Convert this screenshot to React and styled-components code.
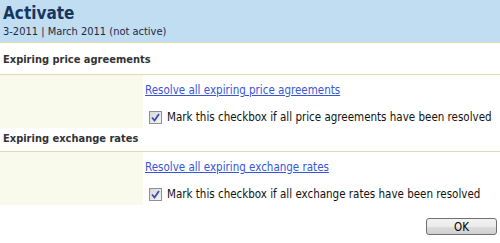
import React from 'react';
import styled, { createGlobalStyle } from 'styled-components';

const GlobalStyle = createGlobalStyle`
  html, body {
    margin: 0;
    padding: 0;
    background: #ffffff;
    font-family: "DejaVu Sans Condensed", "DejaVu Sans", sans-serif;
    font-size: 11px;
  }
`;

const Page = styled.div`
  width: 500px;
  height: 243px;
  display: flex;
  flex-direction: column;
  overflow: hidden;
`;

const Header = styled.div`
  height: 43px;
  box-sizing: border-box;
  padding: 2px 5px 0 3px;
  background: #c1ddf1;
  border-bottom: 1px solid #dcdcb2;
`;

const Title = styled.h1`
  margin: 0;
  font-size: 17px;
  line-height: 22px;
  font-weight: bold;
  color: #15375f;
`;

const Subtitle = styled.div`
  margin-top: 1px;
  font-size: 11px;
  line-height: 14px;
  color: #1c2a44;
`;

const Heading = styled.div`
  height: ${({ h }) => h}px;
  box-sizing: border-box;
  display: flex;
  align-items: flex-end;
  padding: 0 0 ${({ pb }) => pb}px 3px;
  font-weight: bold;
  color: #333333;
  border-bottom: 1px solid #dcdcb2;
`;

const Body = styled.div`
  height: 53px;
  display: grid;
  grid-template-columns: 143px 1fr;
  font-size: 11.5px;
`;

const Side = styled.div`
  background: #fafaec;
`;

const Content = styled.div`
  display: flex;
  flex-direction: column;
  padding: ${({ pt }) => pt}px 0 0 2px;
`;

const Link = styled.a`
  color: #3656d6;
  text-decoration: underline;
  line-height: 14px;
  cursor: pointer;
`;

const CheckRow = styled.label`
  display: flex;
  align-items: center;
  gap: 5px;
  margin: ${({ mt }) => mt}px 0 0 4px;
  color: #111111;
  line-height: 14px;
`;

const Box = styled.span`
  width: 13px;
  height: 13px;
  box-sizing: border-box;
  border: 1px solid #8f8f8f;
  background: linear-gradient(135deg, #d8d8d8, #f4f4f4);
  display: flex;
  align-items: center;
  justify-content: center;
`;

const Footer = styled.div`
  flex: 1;
  display: flex;
  justify-content: flex-end;
  align-items: flex-start;
  padding: 13px 3px 0 0;
`;

const Button = styled.button`
  width: 71px;
  height: 17px;
  padding: 0;
  font-family: inherit;
  font-size: 11.5px;
  color: #000000;
  border: 1px solid #707070;
  border-radius: 3px;
  background: linear-gradient(#f2f2f2 0%, #ebebeb 50%, #dddddd 51%, #cfcfcf 100%);
`;

const Check = () => (
  <Box>
    <svg width="9" height="9" viewBox="0 0 9 9">
      <path d="M1 4.5 L3.5 7.5 L8 1" fill="none" stroke="#3a4fa8" strokeWidth="1.8" />
    </svg>
  </Box>
);

const Section = ({ title, link, label, h, pb, pt, mt }) => (
  <>
    <Heading h={h} pb={pb}>{title}</Heading>
    <Body>
      <Side />
      <Content pt={pt}>
        <Link>{link}</Link>
        <CheckRow mt={mt}>
          <Check />
          {label}
        </CheckRow>
      </Content>
    </Body>
  </>
);

export default function App() {
  return (
    <Page>
      <GlobalStyle />
      <Header>
        <Title>Activate</Title>
        <Subtitle>3-2011 | March 2011 (not active)</Subtitle>
      </Header>
      <Section
        title="Expiring price agreements"
        link="Resolve all expiring price agreements"
        label="Mark this checkbox if all price agreements have been resolved"
        h={32}
        pb={8}
        pt={8}
        mt={13}
      />
      <Section
        title="Expiring exchange rates"
        link="Resolve all expiring exchange rates"
        label="Mark this checkbox if all exchange rates have been resolved"
        h={24}
        pb={6}
        pt={8}
        mt={13}
      />
      <Footer>
        <Button>OK</Button>
      </Footer>
    </Page>
  );
}
